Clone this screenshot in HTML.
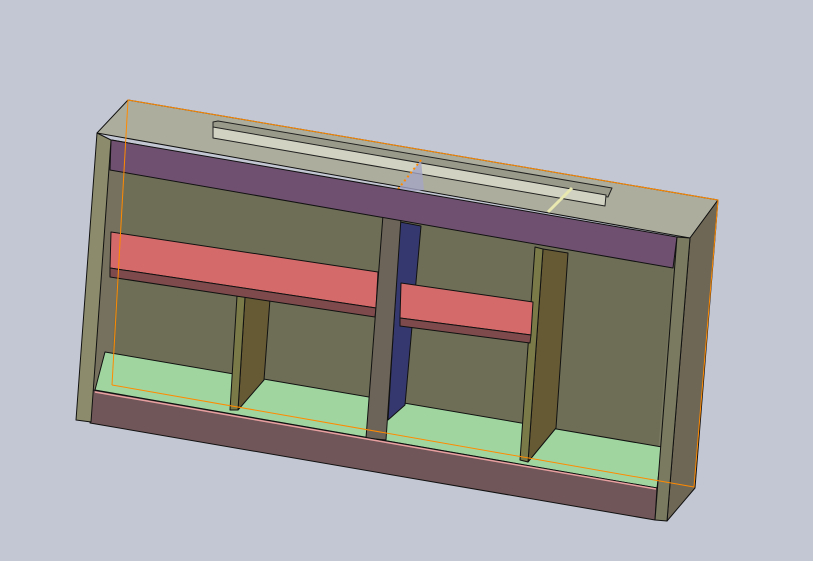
<!DOCTYPE html>
<html><head><meta charset="utf-8"><style>html,body{margin:0;padding:0;background:#c3c7d3;width:813px;height:561px;overflow:hidden}</style></head>
<body>
<svg width="813" height="561" viewBox="0 0 813 561" xmlns="http://www.w3.org/2000/svg" stroke-linejoin="round">
<rect width="813" height="561" fill="#c3c7d3"/>
<!-- back wall -->
<polygon points="112,140 688,245 662,485 92,392" fill="#6e6e56" stroke="#111" stroke-width="1"/>
<!-- left inner side wall -->
<polygon points="111,140 125,170 112,352 98,392 92,392" fill="#76705e"/>
<!-- right inner side -->
<polygon points="676,237 673,267 660,448 655,488" fill="#7a7a62"/>
<!-- floor -->
<polygon points="105,352 662,447 657,488 95,390" fill="#a0d5a0" stroke="#111" stroke-width="1"/>
<!-- blue panel -->
<polygon points="400,222 421,226 405,405 388,420" fill="#35386f" stroke="#111" stroke-width="1"/>
<!-- left small divider -->
<polygon points="245,297 270,299 264,380 238,410" fill="#665a35" stroke="#111" stroke-width="1"/>
<polygon points="237,296 245,297 238,410 230,410" fill="#7a7a48" stroke="#111" stroke-width="1"/>
<!-- right small divider -->
<polygon points="543,249 568,253 556,428 528,462" fill="#665a35" stroke="#111" stroke-width="1"/>
<polygon points="535,247 543,249 528,462 520,460" fill="#7a7a48" stroke="#111" stroke-width="1"/>
<!-- left shelf -->
<polygon points="111,232 378,272 376,308 110,268" fill="#d46a6a" stroke="#111" stroke-width="1"/>
<polygon points="110,268 376,308 375,317 110,277" fill="#7e4a4c" stroke="#111" stroke-width="1"/>
<!-- right shelf -->
<polygon points="401,283 533,302 531,335 400,318" fill="#d46a6a" stroke="#111" stroke-width="1"/>
<polygon points="400,318 531,335 530,343 400,326" fill="#7e4a4c" stroke="#111" stroke-width="1"/>
<!-- middle post -->
<polygon points="383,215 401,218 386,440 366,438" fill="#6c6458" stroke="#111" stroke-width="1"/>
<!-- plinth -->
<polygon points="93,390 657,488 655,520 90,423" fill="#705658" stroke="#111" stroke-width="1"/>
<line x1="95" y1="392" x2="656" y2="489" stroke="#e8a0a0" stroke-width="1.5"/>
<!-- top face -->
<polygon points="128,100 718,200 690,238 97,133" fill="#adad9d" stroke="#111" stroke-width="1"/>
<!-- rail -->
<polygon points="213,122 218,121 612,188 608,197 213,132" fill="#9a9a8a" stroke="#222" stroke-width="1"/>
<polygon points="213,127 606,195 605,206 213,138" fill="#d2d2c2" stroke="#222" stroke-width="1"/>
<!-- translucent bracket -->
<polygon points="395,193 421,160 424,190 405,192" fill="#a4a4c4" opacity="0.8"/>
<line x1="395" y1="193" x2="421" y2="160" stroke="#ff8a00" stroke-width="2" stroke-dasharray="2,3"/>
<line x1="548" y1="212" x2="572" y2="188" stroke="#e8e8b0" stroke-width="3"/>
<!-- purple band -->
<polygon points="111,140 677,237 673,268 110,170" fill="#6f5070" stroke="#111" stroke-width="1"/>
<!-- left panel front -->
<polygon points="97,133 111,140 91,422 76,420" fill="#8c8c6c" stroke="#111" stroke-width="1"/>
<!-- right panel -->
<polygon points="690,238 718,200 695,488 667,521" fill="#6f6756" stroke="#111" stroke-width="1"/>
<polygon points="677,237 690,238 667,521 655,520" fill="#7a7a60" stroke="#111" stroke-width="1"/>
<!-- orange outline -->
<polyline points="112,385 128,100 718,200 694,487 112,385" fill="none" stroke="#ff8a00" stroke-width="1"/>
</svg>
</body></html>
